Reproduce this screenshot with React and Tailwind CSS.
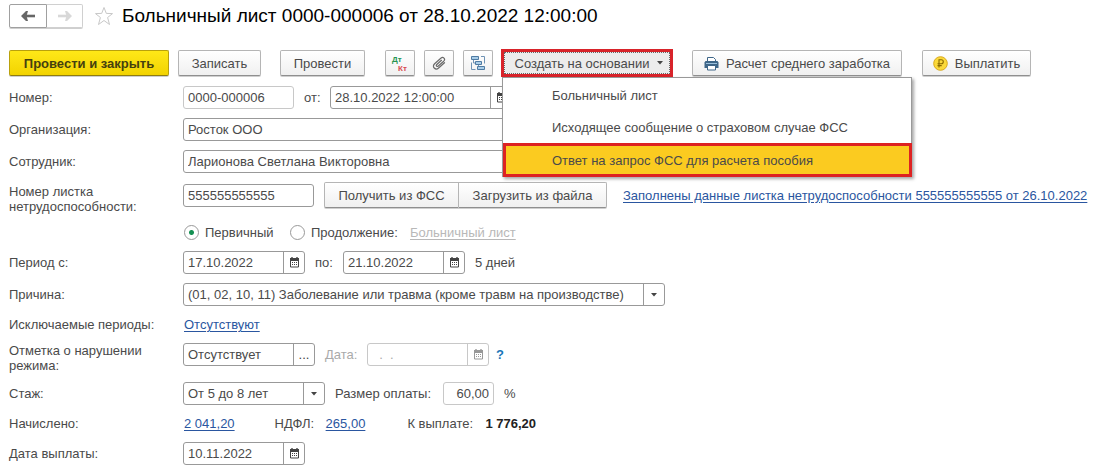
import React, { useState } from 'react';

const CalendarIcon = () => (
  <svg width="11" height="11" viewBox="0 0 11 11" fill="none" aria-hidden="true">
    <path d="M1 1h9v3H1z" fill="currentColor" />
    <path d="M3 0v2M8 0v2" stroke="currentColor" strokeWidth="1.4" />
    <path d="M1.5 3v7h8V3" stroke="currentColor" />
    <path d="M3 5.5h5M3 7.5h5" stroke="currentColor" strokeDasharray="1 1" />
  </svg>
);

const Caret = () => (
  <svg width="6" height="4" viewBox="0 0 6 4" aria-hidden="true">
    <path d="M0 0h6L3 3.5z" fill="#444" />
  </svg>
);

const ArrowIcon = ({ flip, color }) => (
  <svg width="14" height="10" viewBox="0 0 14 10" className={flip ? 'rotate-180' : ''} aria-hidden="true">
    <path d="M14 5H4" stroke={color} strokeWidth="2.6" />
    <path d="M0 5L5 0h2L5.500 5 7 10H5z" fill={color} />
  </svg>
);

const StarIcon = () => (
  <svg width="20" height="20" viewBox="0 0 20 20" fill="none" aria-hidden="true">
    <path d="M10 1.500l2.300 5.900 6.200.2-4.900 3.900 1.900 7-5.500-4-5.500 4 1.900-7-4.900-3.900 6.200-.2z" stroke="#c8c8c8" />
  </svg>
);

const DebitCreditIcon = () => (
  <svg width="20" height="20" viewBox="0 0 20 20" fontFamily="Liberation Sans, Arial, sans-serif" fontSize="8" fontWeight="bold" aria-hidden="true">
    <text x="2" y="9" fill="#259452">Дт</text>
    <text x="8" y="18" fill="#d9494f">Кт</text>
  </svg>
);

const PaperclipIcon = () => (
  <svg width="14" height="14" viewBox="0 0 14 14" fill="none" aria-hidden="true">
    <path
      d="M9.500 4.300L4.800 8.500c-1.200 1.200.2 2.600 1.500 1.500l5.400-4.800c2.200-2.200-.5-5-2.900-3L2.600 7.700c-3.200 3.100.9 7 4 4.300l5.900-5.300"
      stroke="#6a6a6a"
      strokeWidth="1.200"
      strokeLinecap="round"
    />
  </svg>
);

const StructureIcon = () => (
  <svg width="16" height="16" viewBox="0 0 16 16" fill="none" aria-hidden="true">
    <path d="M11 1.500h3.500v7M5.500 14.500h-4v-7M3.500 5v3h2M8.500 10v1.500" stroke="#6f93b5" />
    <path d="M1.500 1.500h7v3h-7zM5.500 6.500h6v3h-6zM7.500 11.500h7v3h-7z" fill="#a9cde8" stroke="#4f7ba3" />
  </svg>
);

const PrinterIcon = () => (
  <svg width="15" height="15" viewBox="0 0 15 15" fill="none" aria-hidden="true">
    <path d="M3.500 5V1.500h6l2 2V5" fill="#fff" stroke="#3e6688" />
    <path d="M1.500 5h12l1 1.500V12h-14V6.500z" fill="#3e6688" />
    <path d="M2 7.500h11" stroke="#9bc0dc" />
    <path d="M3.500 9.500h8v4.500h-8z" fill="#fff" stroke="#3e6688" />
  </svg>
);

const RubleIcon = () => (
  <svg width="15" height="15" viewBox="0 0 15 15" fill="none" aria-hidden="true">
    <circle cx="7.500" cy="7.500" r="6.800" fill="#fbd93a" stroke="#d9a91c" />
    <path d="M6 11.500V3.800h2.300a2 2 0 0 1 0 4H4.500M4.500 9.600h4.200" stroke="#8a6a00" strokeWidth="1.100" />
  </svg>
);

const buttonBase =
  'flex shrink-0 items-center justify-center h-[26px] border border-[#b5b5b5] border-b-[#8f8f8f] rounded-xs bg-linear-to-b from-white to-[#f0f0f0] shadow-[0_1px_0_#cfcfcf] whitespace-nowrap';

const Button = ({ className = '', children, ...props }) => (
  <button type="button" className={`${buttonBase} ${className}`} {...props}>
    {children}
  </button>
);

// Bordered box with an optional button cell on the right
const Field = ({ className = '', muted, addon, children }) => (
  <div className={`flex shrink-0 h-[23px] border rounded-[3px] bg-white overflow-hidden ${muted ? 'border-[#c8c8c8]' : 'border-[#999]'} ${className}`}>
    {children}
    {addon && (
      <span className={`flex w-[21px] shrink-0 items-center justify-center border-l ${muted ? 'border-[#c8c8c8] text-[#999]' : 'border-[#999] text-[#444]'}`}>
        {addon}
      </span>
    )}
  </div>
);

const DateField = ({ id, value, className = 'w-[122px]', muted }) => (
  <Field className={className} muted={muted} addon={<button type="button" disabled={muted} aria-label="Календарь"><CalendarIcon /></button>}>
    <input id={id} type="text" defaultValue={value} disabled={muted} className="min-w-0 flex-1 px-1 outline-none disabled:text-[#aaa]" />
  </Field>
);

const Row = ({ label, htmlFor, className = 'items-center min-h-[23px]', children }) => (
  <div className={`flex ${className}`}>
    <label htmlFor={htmlFor} className="w-[174px] shrink-0 leading-[15px] whitespace-pre-line">{label}</label>
    {children}
  </div>
);

const menuItems = ['Больничный лист', 'Исходящее сообщение о страховом случае ФСС'];

const linkClass = 'text-[#2a56a0] underline underline-offset-2 whitespace-nowrap';
const radioClass =
  'size-[15px] shrink-0 appearance-none rounded-full border border-[#999] bg-white checked:bg-[radial-gradient(circle,#149052_2px,white_3px)]';

const App = () => {
  const [kind, setKind] = useState('primary');

  return (
    <div className="min-h-screen bg-white px-[9px] pt-1 pb-2 font-['Liberation_Sans',Arial,sans-serif] text-[13px] leading-[15px] text-[#4a4a4a]">
      {/* Header */}
      <header className="flex h-6 items-center">
        <div className="flex h-6 shrink-0 rounded-xs shadow-[0_1px_0_#cfcfcf]">
          <button type="button" aria-label="Назад" className="flex w-[38px] items-center justify-center rounded-l-xs border border-[#a0a0a0]">
            <ArrowIcon color="#666" />
          </button>
          <button type="button" aria-label="Вперед" className="flex w-9 items-center justify-center rounded-r-xs border border-l-0 border-[#d0d0d0]">
            <ArrowIcon flip color="#d8d8d8" />
          </button>
        </div>
        <button type="button" aria-label="В избранное" className="ml-[11px] mr-2 shrink-0">
          <StarIcon />
        </button>
        <h1 className="text-[19px] leading-6 text-black whitespace-nowrap">Больничный лист 0000-000006 от 28.10.2022 12:00:00</h1>
      </header>

      {/* Toolbar */}
      <div className="mt-[22px] flex items-center">
        <button type="button" className="flex h-[26px] w-40 shrink-0 items-center justify-center rounded-xs border border-[#b9a10c] border-b-[#8f7d10] bg-linear-to-b from-[#ffe817] to-[#f2d300] font-bold text-[#45400f] shadow-[0_1px_0_#cfcfcf]">
          Провести и закрыть
        </button>
        <Button className="ml-[9px] w-[83px]">Записать</Button>
        <Button className="ml-[19px] w-[85px]">Провести</Button>
        <div className="ml-5 flex gap-[9px]">
          <Button className="w-[30px]" aria-label="Движения документа"><DebitCreditIcon /></Button>
          <Button className="w-[30px]" aria-label="Файлы"><PaperclipIcon /></Button>
          <Button className="w-[30px]" aria-label="Структура подчиненности"><StructureIcon /></Button>
        </div>
        <div className="relative z-10 -my-px ml-2 shrink-0">
          <button type="button" aria-haspopup="menu" aria-expanded="true" className="flex h-7 w-[172px] items-center justify-center border-3 border-[#d8232a] bg-[#ececec]">
            <span className="flex h-full w-full items-center justify-center gap-2 border border-dotted border-[#666] pl-1">
              Создать на основании <Caret />
            </span>
          </button>
          <div role="menu" className="absolute left-px top-full w-[410px] border border-[#999] bg-white pt-px shadow-[2px_2px_3px_rgba(0,0,0,0.35)]">
            {menuItems.map((item) => (
              <button key={item} type="button" role="menuitem" className="block h-8 w-full pl-[49px] text-left whitespace-nowrap">
                {item}
              </button>
            ))}
            <button type="button" role="menuitem" className="-mr-px -mb-px block h-[34px] w-[409px] border-3 border-[#dd2222] bg-[#fbcb20] pl-[46px] text-left whitespace-nowrap">
              Ответ на запрос ФСС для расчета пособия
            </button>
          </div>
        </div>
        <Button className="ml-[19px] w-[210px] gap-[7px]"><PrinterIcon /> Расчет среднего заработка</Button>
        <Button className="ml-5 w-[109px] gap-[7px]"><RubleIcon /> Выплатить</Button>
      </div>

      {/* Form */}
      <form className="mt-[10px] flex flex-col gap-[9px]">
        <Row label="Номер:" htmlFor="number">
          <Field muted className="w-[111px]">
            <input id="number" type="text" readOnly value="0000-000006" className="w-full px-1 outline-none" />
          </Field>
          <label htmlFor="date" className="ml-[10px] w-[26px]">от:</label>
          <DateField id="date" value="28.10.2022 12:00:00" className="w-[182px]" />
        </Row>

        <Row label="Организация:" htmlFor="org">
          <Field className="w-[482px]">
            <input id="org" type="text" defaultValue="Росток ООО" className="w-full px-1 outline-none" />
          </Field>
        </Row>

        <Row label="Сотрудник:" htmlFor="employee">
          <Field className="w-[482px]">
            <input id="employee" type="text" defaultValue="Ларионова Светлана Викторовна" className="w-full px-1 outline-none" />
          </Field>
        </Row>

        <div className="flex items-start">
          <label htmlFor="sheet" className="w-[174px] shrink-0 pt-0.5">Номер листка<br />нетрудоспособности:</label>
          <div className="flex items-center">
            <Field className="w-[131px]">
              <input id="sheet" type="text" defaultValue="555555555555" className="w-full px-1 outline-none" />
            </Field>
            <Button className="ml-[10px] w-[135px] rounded-r-none">Получить из ФСС</Button>
            <Button className="w-[148px] rounded-l-none border-l-0">Загрузить из файла</Button>
            <a href="#data" className={`ml-4 ${linkClass}`}>Заполнены данные листка нетрудоспособности 555555555555 от 26.10.2022</a>
          </div>
        </div>

        <div className="flex h-[19px] items-center pl-[175px]">
          <label className="flex w-[106px] items-center gap-[6px]">
            <input type="radio" name="kind" className={radioClass} checked={kind === 'primary'} onChange={() => setKind('primary')} />
            Первичный
          </label>
          <label className="flex w-[120px] items-center gap-[6px]">
            <input type="radio" name="kind" className={radioClass} checked={kind === 'next'} onChange={() => setKind('next')} />
            Продолжение:
          </label>
          <a href="#previous" className="text-[#b8b8b8] underline underline-offset-2">Больничный лист</a>
        </div>

        <Row label="Период с:" htmlFor="from">
          <DateField id="from" value="17.10.2022" />
          <label htmlFor="to" className="ml-[10px] w-7">по:</label>
          <DateField id="to" value="21.10.2022" />
          <span className="ml-[10px]">5 дней</span>
        </Row>

        <Row label="Причина:" htmlFor="reason">
          <Field className="w-[482px]" addon={<Caret />}>
            <select id="reason" className="min-w-0 flex-1 appearance-none px-1 outline-none">
              <option>(01, 02, 10, 11) Заболевание или травма (кроме травм на производстве)</option>
            </select>
          </Field>
        </Row>

        <Row label="Исключаемые периоды:" className="h-[19px] items-center">
          <a href="#excluded" className={`ml-px ${linkClass}`}>Отсутствуют</a>
        </Row>

        <Row label={'Отметка о нарушении\nрежима:'} htmlFor="violation" className="items-start">
          <div className="flex items-center">
            <Field className="w-[132px]" addon={<button type="button" aria-label="Выбрать">...</button>}>
              <input id="violation" type="text" defaultValue="Отсутствует" className="min-w-0 flex-1 px-1 outline-none" />
            </Field>
            <label htmlFor="violation-date" className="ml-[10px] w-[42px] text-[#aaa]">Дата:</label>
            <DateField id="violation-date" value="  .  ." muted />
            <button type="button" className="ml-[7px] font-bold text-[#1a76b8]">?</button>
          </div>
        </Row>

        <Row label="Стаж:" htmlFor="experience">
          <Field className="w-[142px]" addon={<Caret />}>
            <select id="experience" className="min-w-0 flex-1 appearance-none px-1 outline-none">
              <option>От 5 до 8 лет</option>
            </select>
          </Field>
          <label htmlFor="rate" className="ml-[10px] w-[108px]">Размер оплаты:</label>
          <Field muted className="w-[51px]">
            <input id="rate" type="text" readOnly value="60,00" className="w-full px-1 text-right outline-none" />
          </Field>
          <span className="ml-[10px]">%</span>
        </Row>

        <Row label="Начислено:" className="h-[19px] items-center">
          <a href="#accrued" className={`ml-px ${linkClass}`}>2 041,20</a>
          <span className="ml-10 w-[51px]">НДФЛ:</span>
          <a href="#tax" className={linkClass}>265,00</a>
          <span className="ml-[42px] w-[78px]">К выплате:</span>
          <b className="text-[#222]">1 776,20</b>
        </Row>

        <Row label="Дата выплаты:" htmlFor="paid">
          <DateField id="paid" value="10.11.2022" />
        </Row>
      </form>
    </div>
  );
};

export default App;
